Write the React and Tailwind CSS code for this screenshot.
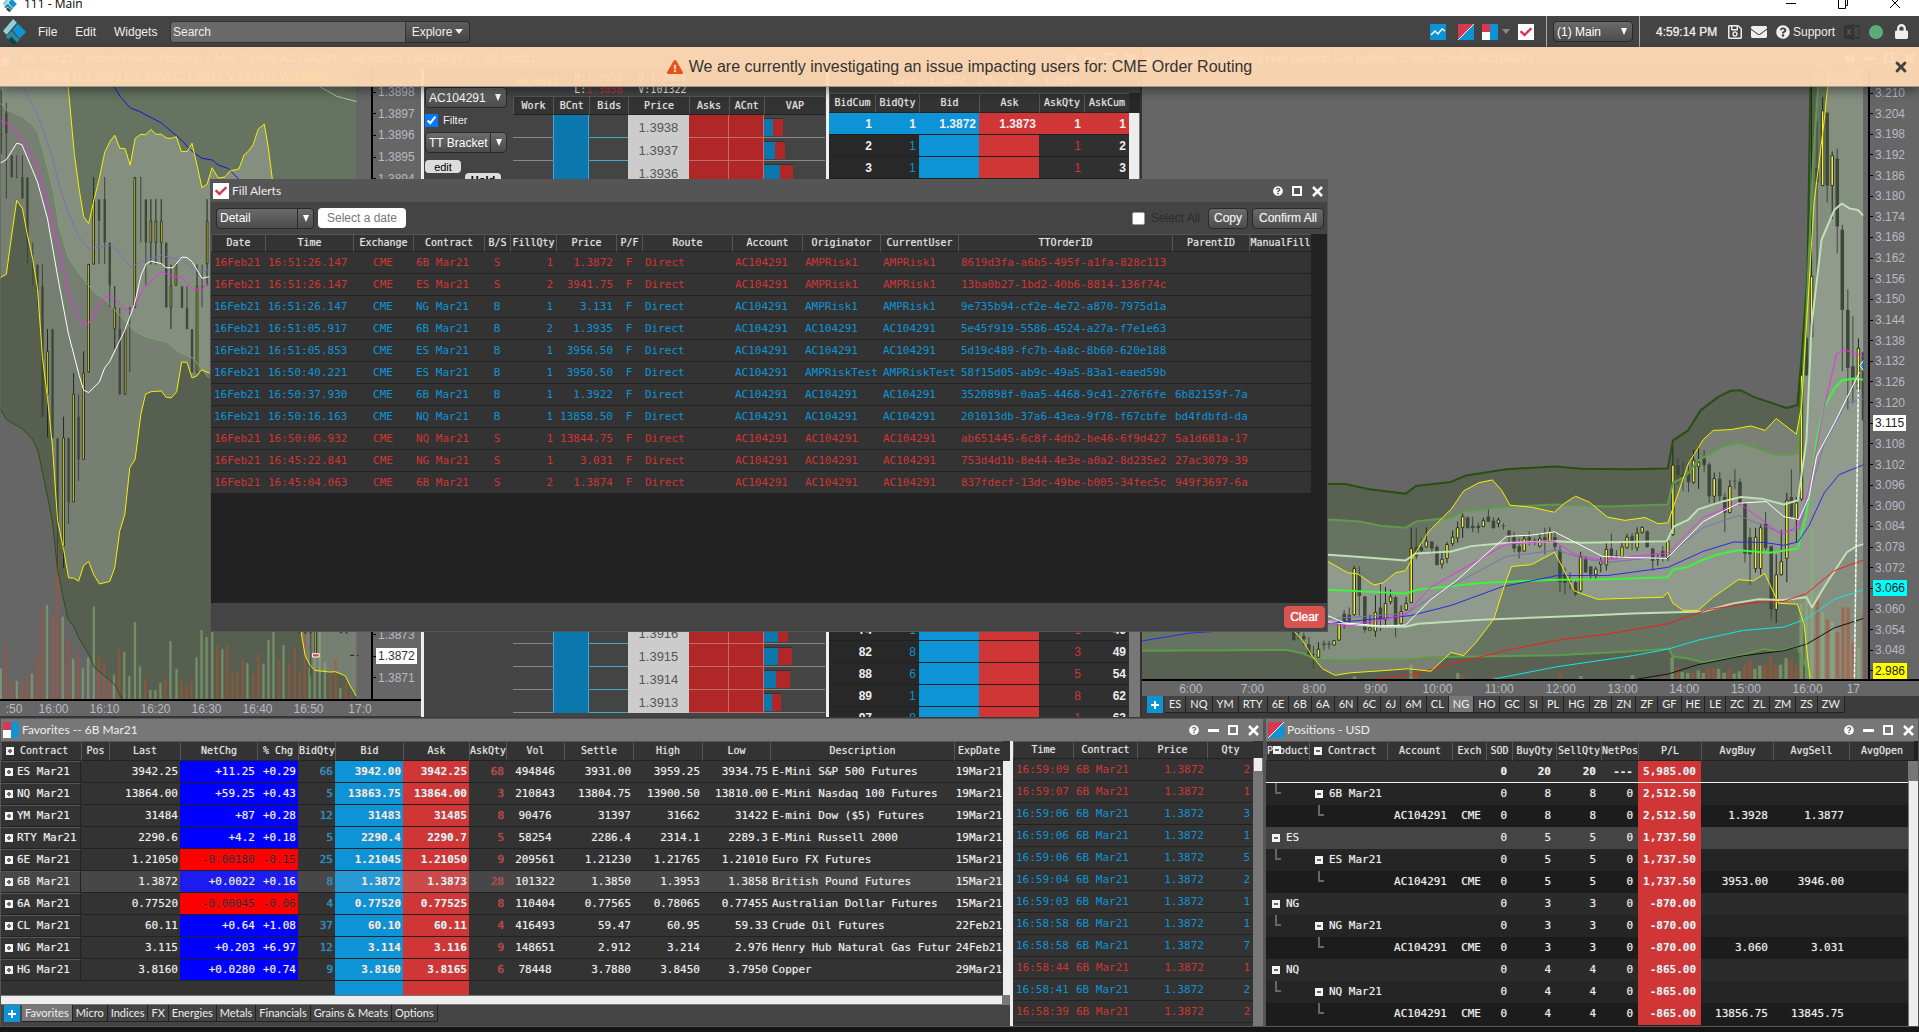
import { useState } from "react";
import { FaCheck, FaExclamationTriangle, FaLock, FaEnvelope, FaRegSave, FaQuestionCircle, FaTimes } from "react-icons/fa";

const BLUE = "text-[#0d94d6]";
const RED = "text-[#d03535]";

const fillColumns = [
    { label: "Date", w: "w-[54px]", align: "text-left" },
    { label: "Time", w: "w-[88px]", align: "text-left" },
    { label: "Exchange", w: "w-[60px]", align: "text-center" },
    { label: "Contract", w: "w-[71px]", align: "text-left" },
    { label: "B/S", w: "w-[26px]", align: "text-center" },
    { label: "FillQty", w: "w-[46px]", align: "text-right" },
    { label: "Price", w: "w-[60px]", align: "text-right" },
    { label: "P/F", w: "w-[26px]", align: "text-center" },
    { label: "Route", w: "w-[90px]", align: "text-left" },
    { label: "Account", w: "w-[70px]", align: "text-left" },
    { label: "Originator", w: "w-[78px]", align: "text-left" },
    { label: "CurrentUser", w: "w-[78px]", align: "text-left" },
    { label: "TTOrderID", w: "w-[214px]", align: "text-left" },
    { label: "ParentID", w: "w-[77px]", align: "text-left" },
    { label: "ManualFill", w: "w-[62px]", align: "text-left" },
];

const fills = [
    ["16:51:26.147", "6B Mar21", "S", "1", "1.3872", "AMPRisk1", "8619d3fa-a6b5-495f-a1fa-828c113", ""],
    ["16:51:26.147", "ES Mar21", "S", "2", "3941.75", "AMPRisk1", "13ba0b27-1bd2-40b6-8814-136f74c", ""],
    ["16:51:26.147", "NG Mar21", "B", "1", "3.131", "AMPRisk1", "9e735b94-cf2e-4e72-a870-7975d1a", ""],
    ["16:51:05.917", "6B Mar21", "B", "2", "1.3935", "AC104291", "5e45f919-5586-4524-a27a-f7e1e63", ""],
    ["16:51:05.853", "ES Mar21", "B", "1", "3956.50", "AC104291", "5d19c489-fc7b-4a8c-8b60-620e188", ""],
    ["16:50:40.221", "ES Mar21", "B", "1", "3950.50", "AMPRiskTest", "58f15d05-ab9c-49a5-83a1-eaed59b", ""],
    ["16:50:37.930", "6B Mar21", "B", "1", "1.3922", "AC104291", "3520898f-0aa5-4468-9c41-276f6fe", "6b82159f-7a"],
    ["16:50:16.163", "NQ Mar21", "B", "1", "13858.50", "AC104291", "201013db-37a6-43ea-9f78-f67cbfe", "bd4fdbfd-da"],
    ["16:50:06.932", "NQ Mar21", "S", "1", "13844.75", "AC104291", "ab651445-6c8f-4db2-be46-6f9d427", "5a1d681a-17"],
    ["16:45:22.841", "NG Mar21", "S", "1", "3.031", "AC104291", "753d4d1b-8e44-4e3e-a0a2-8d235e2", "27ac3079-39"],
    ["16:45:04.063", "6B Mar21", "S", "2", "1.3874", "AC104291", "837fdecf-13dc-49be-b005-34fec5c", "949f3697-6a"],
];

const favColumns = [
    { label: "Contract", w: "w-[80px]", align: "text-left" },
    { label: "Pos", w: "w-[28px]", align: "text-right" },
    { label: "Last", w: "w-[71px]", align: "text-right" },
    { label: "NetChg", w: "w-[77px]", align: "text-right" },
    { label: "% Chg", w: "w-[41px]", align: "text-right" },
    { label: "BidQty", w: "w-[37px]", align: "text-right" },
    { label: "Bid", w: "w-[68px]", align: "text-right" },
    { label: "Ask", w: "w-[66px]", align: "text-right" },
    { label: "AskQty", w: "w-[37px]", align: "text-right" },
    { label: "Vol", w: "w-[58px]", align: "text-center" },
    { label: "Settle", w: "w-[69px]", align: "text-right" },
    { label: "High", w: "w-[69px]", align: "text-right" },
    { label: "Low", w: "w-[68px]", align: "text-right" },
    { label: "Description", w: "w-[184px]", align: "text-left" },
    { label: "ExpDate", w: "w-[49px]", align: "text-right" },
];

const favorites = [
    ["ES Mar21", "", "3942.25", "+11.25", "+0.29", "66", "3942.00", "3942.25", "68", "494846", "3931.00", "3959.25", "3934.75", "E-Mini S&P 500 Futures", "19Mar21"],
    ["NQ Mar21", "", "13864.00", "+59.25", "+0.43", "5", "13863.75", "13864.00", "3", "210843", "13804.75", "13900.50", "13810.00", "E-Mini Nasdaq 100 Futures", "19Mar21"],
    ["YM Mar21", "", "31484", "+87", "+0.28", "12", "31483", "31485", "8", "90476", "31397", "31662", "31422", "E-mini Dow ($5) Futures", "19Mar21"],
    ["RTY Mar21", "", "2290.6", "+4.2", "+0.18", "5", "2290.4", "2290.7", "5", "58254", "2286.4", "2314.1", "2289.3", "E-Mini Russell 2000", "19Mar21"],
    ["6E Mar21", "", "1.21050", "-0.00180", "-0.15", "25", "1.21045", "1.21050", "9", "209561", "1.21230", "1.21765", "1.21010", "Euro FX Futures", "15Mar21"],
    ["6B Mar21", "", "1.3872", "+0.0022", "+0.16", "8", "1.3872", "1.3873", "28", "101322", "1.3850", "1.3953", "1.3858", "British Pound Futures", "15Mar21"],
    ["6A Mar21", "", "0.77520", "-0.00045", "-0.06", "4", "0.77520", "0.77525", "8", "110404", "0.77565", "0.78065", "0.77455", "Australian Dollar Futures", "15Mar21"],
    ["CL Mar21", "", "60.11", "+0.64", "+1.08", "37", "60.10", "60.11", "4", "416493", "59.47", "60.95", "59.33", "Crude Oil Futures", "22Feb21"],
    ["NG Mar21", "", "3.115", "+0.203", "+6.97", "12", "3.114", "3.116", "9", "148651", "2.912", "3.214", "2.976", "Henry Hub Natural Gas Futur", "24Feb21"],
    ["HG Mar21", "", "3.8160", "+0.0280", "+0.74", "9", "3.8160", "3.8165", "6", "78448", "3.7880", "3.8450", "3.7950", "Copper", "29Mar21"],
];

const favTabs = ["Favorites", "Micro", "Indices", "FX", "Energies", "Metals", "Financials", "Grains & Meats", "Options"];

const tradeColumns = [
    { label: "Time", w: "w-[60px]" },
    { label: "Contract", w: "w-[64px]" },
    { label: "Price", w: "w-[70px]" },
    { label: "Qty", w: "w-[46px]" },
];

const trades = [
    ["16:59:09", "2", "S"],
    ["16:59:07", "1", "S"],
    ["16:59:06", "3", "B"],
    ["16:59:06", "1", "B"],
    ["16:59:06", "5", "B"],
    ["16:59:04", "2", "B"],
    ["16:59:03", "1", "B"],
    ["16:58:58", "1", "B"],
    ["16:58:58", "7", "B"],
    ["16:58:44", "1", "S"],
    ["16:58:41", "2", "B"],
    ["16:58:39", "2", "S"],
];

const posColumns = [
    { label: "Product", w: "w-[43px]" },
    { label: "Contract", w: "w-[78px]" },
    { label: "Account", w: "w-[65px]" },
    { label: "Exch", w: "w-[34px]" },
    { label: "SOD", w: "w-[26px]" },
    { label: "BuyQty", w: "w-[44px]" },
    { label: "SellQty", w: "w-[45px]" },
    { label: "NetPos", w: "w-[37px]" },
    { label: "P/L", w: "w-[63px]" },
    { label: "AvgBuy", w: "w-[72px]" },
    { label: "AvgSell", w: "w-[76px]" },
    { label: "AvgOpen", w: "w-[65px]" },
];

// level: total, product, contract, account
const positions = [
    { level: "total", qty: "20", net: "---", pl: "5,985.00" },
    { level: "contract", name: "6B Mar21", qty: "8", net: "0", pl: "2,512.50" },
    { level: "account", qty: "8", net: "0", pl: "2,512.50", buy: "1.3928", sell: "1.3877" },
    { level: "product", name: "ES", qty: "5", net: "0", pl: "1,737.50", hover: true },
    { level: "contract", name: "ES Mar21", qty: "5", net: "0", pl: "1,737.50" },
    { level: "account", qty: "5", net: "0", pl: "1,737.50", buy: "3953.00", sell: "3946.00" },
    { level: "product", name: "NG", qty: "3", net: "0", pl: "-870.00" },
    { level: "contract", name: "NG Mar21", qty: "3", net: "0", pl: "-870.00" },
    { level: "account", qty: "3", net: "0", pl: "-870.00", buy: "3.060", sell: "3.031" },
    { level: "product", name: "NQ", qty: "4", net: "0", pl: "-865.00" },
    { level: "contract", name: "NQ Mar21", qty: "4", net: "0", pl: "-865.00" },
    { level: "account", qty: "4", net: "0", pl: "-865.00", buy: "13856.75", sell: "13845.75" },
];

const ladderColumns = [
    { label: "Work", w: "w-[40px]" },
    { label: "BCnt", w: "w-[36px]" },
    { label: "Bids", w: "w-[39px]" },
    { label: "Price", w: "w-[60px]" },
    { label: "Asks", w: "w-[40px]" },
    { label: "ACnt", w: "w-[35px]" },
    { label: "VAP", w: "w-[61px]" },
];

// [bid volume, ask volume] per price, starting at 1.3938
const vap = [
    [9, 10], [11, 10], [16, 13], [12, 8], [9, 9], [14, 10], [10, 7], [8, 12], [13, 13],
    [15, 9], [11, 12], [9, 8], [12, 10], [14, 14], [10, 10], [8, 9], [12, 11], [16, 12],
    [13, 10], [11, 9], [9, 10], [12, 12], [14, 10], [14, 14], [12, 14], [8, 9],
];

const depthColumns = [
    { label: "BidCum", w: "w-[46px]" },
    { label: "BidQty", w: "w-[44px]" },
    { label: "Bid", w: "w-[60px]" },
    { label: "Ask", w: "w-[60px]" },
    { label: "AskQty", w: "w-[45px]" },
    { label: "AskCum", w: "w-[45px]" },
];

const depth = { 0: ["1", "1", "1", "1"], 1: ["2", "1", "1", "2"], 2: ["3", "1", "1", "3"], 23: ["74", "1", "1", "46"], 24: ["82", "8", "3", "49"], 25: ["88", "6", "5", "54"], 26: ["89", "1", "8", "62"], 27: ["97", "8", "1", "63"] };

const chartTabs = ["ES", "NQ", "YM", "RTY", "6E", "6B", "6A", "6N", "6C", "6J", "6M", "CL", "NG", "HO", "GC", "SI", "PL", "HG", "ZB", "ZN", "ZF", "GF", "HE", "LE", "ZC", "ZL", "ZM", "ZS", "ZW"];

// candles: [x, high, body top, body bottom, low, up]
const poundCandles = [
    [7, 25, 132, 134, 182, 0], [22, 55, 80, 130, 290, 0], [38, 184, 185, 238, 239, 0], [53, 184, 237, 239, 240, 0], [70, 184, 238, 290, 291, 0],
    [85, 238, 239, 395, 450, 0], [101, 398, 450, 452, 503, 0], [115, 452, 453, 515, 557, 0], [130, 452, 505, 825, 826, 0], [145, 610, 665, 770, 875, 1],
    [160, 610, 611, 877, 878, 0], [175, 877, 878, 1088, 1196, 0], [193, 825, 877, 1142, 1195, 1], [208, 877, 878, 1035, 1088, 0], [223, 718, 770, 1034, 1035, 1],
    [238, 770, 825, 930, 983, 0], [253, 665, 718, 930, 931, 1], [268, 451, 452, 716, 718, 1], [283, 238, 292, 451, 452, 1], [299, 292, 293, 345, 451, 0],
    [316, 238, 292, 398, 451, 0], [331, 398, 399, 503, 556, 0], [346, 505, 558, 610, 660, 1], [361, 558, 610, 770, 771, 0], [377, 610, 612, 770, 771, 1],
    [391, 557, 558, 560, 716, 0], [406, 238, 239, 557, 558, 1], [424, 238, 239, 240, 398, 0], [439, 292, 293, 398, 503, 0], [454, 292, 346, 398, 452, 1],
    [469, 292, 346, 398, 452, 1], [485, 292, 346, 398, 452, 1], [500, 398, 399, 557, 558, 0], [514, 452, 505, 557, 610, 1], [529, 450, 453, 503, 504, 1],
    [547, 505, 506, 558, 559, 0], [562, 505, 558, 610, 611, 0], [577, 610, 611, 716, 717, 0], [592, 452, 505, 716, 718, 1], [607, 452, 505, 507, 557, 0],
    [622, 292, 346, 450, 504, 1], [899, 1340, 1352, 1356, 1357, 0], [916, 1340, 1350, 1357, 1358, 0], [932, 1340, 1350, 1356, 1462, 0], [947, 1340, 1341, 1408, 1409, 1], [1022, 1340, 1342, 1354, 1356, 1], [1039, 1340, 1342, 1356, 1357, 0],
];

const poundVolume = [
    [5, 1442, 1], [20, 1388, 0], [38, 1475, 0], [53, 1472, 1], [68, 1480, 0], [83, 1461, 0], [98, 1454, 1], [113, 1412, 0], [128, 1300, 0],
    [143, 1287, 1], [160, 1316, 0], [175, 1135, 0], [190, 1315, 1], [206, 1370, 0], [221, 1418, 1], [236, 1402, 0], [250, 1442, 1], [266, 1415, 1],
    [283, 1290, 1], [298, 1413, 0], [313, 1427, 0], [328, 1465, 0], [343, 1457, 1], [358, 1395, 0], [374, 1402, 1], [389, 1461, 1], [406, 1328, 1],
    [421, 1437, 1], [436, 1467, 0], [452, 1495, 1], [467, 1495, 1], [482, 1478, 1], [496, 1465, 0], [512, 1375, 1], [530, 1443, 1], [545, 1473, 0],
    [560, 1486, 0], [575, 1473, 0], [590, 1415, 1], [605, 1348, 1], [620, 1365, 1], [637, 1340, 1], [652, 1385, 0], [667, 1395, 1], [682, 1385, 0],
    [697, 1454, 0], [712, 1451, 0], [728, 1420, 0], [742, 1429, 1], [760, 1457, 0], [775, 1405, 0], [790, 1430, 1], [805, 1372, 1], [820, 1340, 1],
    [837, 1422, 0], [850, 1385, 1], [866, 1429, 0], [884, 1390, 0], [899, 1448, 0], [913, 1340, 0], [928, 1440, 1], [943, 1400, 1], [958, 1340, 1],
    [974, 1427, 1], [990, 1455, 0], [1006, 1420, 0], [1020, 1490, 1], [1037, 1478, 0], [1052, 1500, 0],
];

const gasCandles = [
    [328, 1330, 1340, 1370, 1371, 0], [337, 1330, 1345, 1352, 1368, 0], [348, 1352, 1360, 1368, 1384, 0], [358, 1362, 1380, 1412, 1414, 0], [367, 1384, 1404, 1406, 1440, 0],
    [377, 1375, 1392, 1412, 1413, 1], [388, 1371, 1378, 1382, 1395, 0], [398, 1372, 1378, 1381, 1392, 0], [408, 1370, 1371, 1382, 1383, 1], [418, 1320, 1330, 1370, 1371, 1],
    [428, 1296, 1305, 1330, 1342, 0], [438, 1290, 1308, 1322, 1330, 0], [448, 1188, 1195, 1308, 1310, 1], [458, 1190, 1210, 1262, 1310, 0], [469, 1262, 1263, 1345, 1352, 0], [479, 1308, 1340, 1346, 1347, 1],
    [490, 1260, 1302, 1348, 1362, 1], [500, 1232, 1290, 1320, 1348, 0], [510, 1240, 1280, 1320, 1333, 1], [520, 1246, 1264, 1276, 1282, 1], [530, 1262, 1265, 1333, 1362, 0], [541, 1285, 1300, 1330, 1334, 1],
    [551, 1264, 1280, 1296, 1298, 1], [561, 1095, 1146, 1278, 1280, 1], [571, 1095, 1142, 1165, 1172, 0], [581, 1120, 1142, 1152, 1156, 0], [591, 1094, 1128, 1142, 1143, 1], [602, 1128, 1129, 1146, 1160, 0],
    [612, 1138, 1142, 1186, 1188, 0], [622, 1152, 1172, 1184, 1195, 1], [632, 1130, 1136, 1170, 1182, 1], [643, 1102, 1118, 1134, 1140, 1], [653, 1080, 1095, 1120, 1132, 1], [663, 1060, 1068, 1094, 1120, 1],
    [673, 1068, 1070, 1096, 1097, 0], [683, 1068, 1090, 1096, 1106, 0], [694, 1082, 1090, 1096, 1108, 0], [704, 1070, 1078, 1092, 1094, 1], [714, 1050, 1068, 1080, 1081, 0], [724, 1070, 1078, 1096, 1097, 0],
    [734, 1070, 1076, 1084, 1094, 1], [744, 1084, 1090, 1092, 1100, 0], [755, 1100, 1102, 1116, 1130, 0], [765, 1105, 1118, 1146, 1155, 0], [775, 1120, 1140, 1154, 1170, 0], [785, 1112, 1122, 1152, 1153, 1], [795, 1104, 1118, 1126, 1138, 0],
    [806, 1120, 1126, 1128, 1138, 0], [816, 1108, 1122, 1140, 1144, 1], [826, 1095, 1118, 1126, 1160, 0], [836, 1094, 1106, 1128, 1130, 1], [846, 1105, 1118, 1142, 1150, 0], [856, 1140, 1150, 1228, 1252, 0],
    [866, 1192, 1208, 1230, 1258, 0], [876, 1204, 1225, 1228, 1246, 0], [887, 1225, 1228, 1258, 1262, 0], [897, 1154, 1166, 1250, 1254, 1], [907, 1164, 1170, 1204, 1206, 0], [917, 1188, 1190, 1210, 1220, 0],
    [927, 1190, 1196, 1210, 1220, 1], [937, 1168, 1178, 1184, 1204, 1], [948, 1130, 1148, 1186, 1200, 1], [958, 1110, 1146, 1168, 1170, 0], [968, 1150, 1162, 1166, 1172, 0], [979, 1132, 1142, 1166, 1167, 1],
    [989, 1110, 1118, 1144, 1146, 1], [999, 1108, 1116, 1130, 1150, 0], [1009, 1094, 1108, 1144, 1152, 1], [1019, 1092, 1094, 1106, 1110, 1], [1029, 1102, 1104, 1142, 1144, 0], [1040, 1144, 1146, 1176, 1200, 0],
    [1050, 1158, 1168, 1172, 1188, 1], [1060, 1140, 1152, 1168, 1178, 0], [1070, 1120, 1128, 1168, 1176, 1], [1080, 895, 942, 1112, 1115, 1], [1090, 925, 942, 965, 990, 0], [1100, 934, 965, 972, 1006, 0], [1111, 944, 962, 984, 1008, 0], [1121, 905, 930, 984, 988, 1],
    [1131, 895, 935, 945, 1000, 1], [1142, 905, 925, 942, 960, 0], [1152, 935, 940, 1018, 1034, 0], [1162, 960, 975, 1018, 1034, 1], [1173, 958, 975, 1018, 1034, 0], [1183, 1010, 1020, 1058, 1106, 0], [1193, 978, 994, 1058, 1060, 1],
    [1203, 952, 980, 982, 1000, 0], [1213, 975, 983, 1036, 1040, 0], [1223, 1034, 1036, 1158, 1180, 0], [1233, 1095, 1118, 1160, 1235, 0], [1244, 1095, 1118, 1195, 1205, 1], [1254, 1085, 1095, 1195, 1210, 1], [1264, 1056, 1085, 1145, 1150, 0],
    [1275, 1138, 1140, 1295, 1320, 0], [1285, 1160, 1210, 1295, 1328, 1], [1295, 1100, 1178, 1210, 1212, 1], [1306, 1010, 1028, 1170, 1228, 1], [1315, 952, 1020, 1068, 1070, 0], [1325, 1020, 1034, 1074, 1130, 1], [1335, 700, 722, 1025, 1030, 1],
    [1345, 480, 630, 722, 724, 0], [1355, 0, 480, 628, 640, 1], [1366, 100, 215, 250, 480, 0], [1377, 42, 75, 258, 260, 1], [1386, 78, 80, 258, 300, 0], [1396, 175, 185, 258, 340, 1], [1406, 168, 192, 358, 424, 0],
    [1416, 354, 366, 562, 712, 0], [1427, 512, 562, 704, 806, 0], [1437, 578, 700, 728, 790, 0], [1448, 632, 656, 756, 780, 1], [1458, 664, 666, 832, 1040, 0],
];

const gasVolume = [
    [560, 1430, 1], [571, 1446, 0], [448, 1458, 1], [653, 1450, 1], [663, 1456, 0], [724, 1458, 0], [765, 1460, 0], [856, 1452, 0], [897, 1458, 1], [999, 1455, 1], [1060, 1456, 0],
    [1078, 1412, 1], [1088, 1436, 0], [1098, 1448, 1], [1109, 1450, 1], [1119, 1448, 0], [1130, 1444, 1], [1140, 1450, 1], [1150, 1436, 0], [1160, 1438, 0], [1170, 1440, 1], [1181, 1450, 1], [1191, 1440, 0],
    [1201, 1452, 1], [1211, 1446, 1], [1222, 1430, 0], [1232, 1420, 0], [1242, 1440, 1], [1252, 1432, 1], [1262, 1430, 0], [1273, 1412, 0], [1283, 1432, 0], [1293, 1430, 1], [1304, 1414, 1], [1314, 1418, 0], [1324, 1432, 0],
    [1334, 1280, 1], [1345, 1250, 1], [1355, 1095, 1], [1366, 1270, 0], [1376, 1300, 1], [1386, 1320, 0], [1396, 1325, 1], [1406, 1350, 0], [1417, 1290, 0], [1427, 1290, 0], [1437, 1376, 0], [1448, 1388, 1], [1458, 1296, 0],
];

const gasUpper = "395,988 430,988 475,1000 550,1012 570,993 640,983 670,967 750,952 845,945 900,951 1000,952 1070,950 1080,882 1110,857 1135,808 1170,775 1195,760 1215,759 1240,775 1305,802 1327,795 1335,680 1347,480 1353,-22";
const gasMiddle = "395,1075 460,1080 500,1090 550,1095 570,1080 640,1070 665,1055 730,1045 845,1038 950,1043 1070,1038 1080,985 1105,970 1130,930 1180,895 1210,888 1240,897 1280,915 1305,918 1327,912 1340,700 1358,200 1370,-22";
const gasInner = "395,1161 440,1165 550,1175 570,1158 640,1153 680,1140 740,1133 850,1128 900,1132 1068,1128 1082,1092 1110,1076 1130,1050 1180,1030 1215,1020 1260,1025 1300,1038 1328,1028 1345,880 1355,600 1375,390 1400,318 1415,302 1430,314 1447,318 1458,332";
const gasInnerLow = "395,1325 430,1330 500,1337 550,1337 575,1330 700,1320 900,1310 1000,1305 1140,1300 1200,1280 1250,1270 1300,1272 1345,1265 1356,1290 1380,1240 1425,1155 1445,1140 1458,1135";
const gasMiddleLow = "27,1396 315,1394 345,1402 375,1418 430,1420 500,1417 550,1418 600,1412 850,1407 1000,1397 1072,1391 1080,1410 1110,1415 1140,1424 1200,1412 1260,1392 1290,1397 1327,1386 1345,1440 1352,1465";
const gasYellow = "395,1177 435,1205 455,1208 487,1235 505,1230 530,1205 550,1200 565,1165 595,1105 640,1050 665,1005 695,985 722,978 740,1003 757,1040 800,1045 845,1057 865,1035 887,1018 915,1033 950,1069 985,1077 1025,1070 1050,1085 1070,1083 1085,1030 1110,940 1140,880 1160,857 1195,855 1235,846 1263,857 1285,828 1325,866 1335,800 1345,600 1360,300 1380,100 1390,-22";
const gasYellowLow = "330,1350 345,1370 365,1410 385,1440 410,1456 440,1450 500,1445 555,1440 600,1446 640,1400 665,1408 690,1375 725,1318 745,1240 760,1190 800,1185 845,1155 860,1190 885,1250 930,1270 1060,1265 1070,1253 1080,1280 1100,1297 1130,1297 1160,1265 1210,1222 1240,1225 1262,1207 1290,1280 1327,1282 1340,1330 1352,1465";

const poundYellow = "200,-22 207,17 225,180 240,270 253,335 268,352 285,290 300,240 316,177 331,152 346,135 361,167 377,168 392,209 407,143 424,133 439,134 454,121 469,133 485,133 500,142 515,143 530,139 545,175 563,175 577,155 592,210 607,264 622,255 637,215 655,240 675,238 690,223 717,218 733,183 745,175 760,158 775,120 793,108 805,165 817,243 870,900 1069,1100";
const poundYellowLow = "5,484 22,476 38,380 53,295 70,315 85,380 101,440 115,510 130,680 145,780 160,900 175,1080 193,1150 208,1220 223,1221 238,1228 253,1190 268,1180 283,1212 300,1235 331,1229 346,1195 361,1105 376,1065 391,950 407,930 424,820 438,770 454,764 485,762 500,778 515,779 531,764 546,691 562,692 577,730 592,725 605,710 627,718 700,700 850,1000 903,1352 915,1410 930,1435 945,1447 990,1451 1006,1450 1035,1460 1050,1485 1069,1511";
const poundMiddle = "5,57 22,73 70,90 100,110 117,130 145,215 162,270 180,360 208,437 240,475 285,520 330,548 375,590 405,615 440,630 500,642 540,668 580,682 627,730";
const poundOuter = "5,808 22,832 70,855 100,880 117,910 145,1020 160,1085 175,1200 205,1320 224,1340 240,1370 270,1410 285,1440 330,1470 347,1483 368,1517";

const reverse = (points) => points.split(" ").reverse().join(" ");

export default function App() {
    const [bannerOpen, setBannerOpen] = useState(true);
    const [alertsOpen, setAlertsOpen] = useState(true);

    return (
        <div className="flex h-screen min-h-[800px] flex-col overflow-hidden bg-[#161616] font-['Liberation_Sans',Arial,sans-serif] text-[12px] leading-4 text-[#eee]">
            <TitleBar />
            <Toolbar />
            <main className="relative flex min-h-0 flex-1 flex-col">
                <div className="grid min-h-0 flex-1 grid-cols-[1142fr_777fr] bg-[#3a3a3a] pb-px">
                    <PoundWindow />
                    <GasWindow />
                </div>
                <div className="grid h-[309px] shrink-0 grid-cols-[1264fr_655fr] bg-[#222]">
                    <FavoritesWindow />
                    <PositionsWindow />
                </div>
                {bannerOpen && <Banner onClose={() => setBannerOpen(false)} />}
                {alertsOpen && <FillAlerts onClose={() => setAlertsOpen(false)} />}
            </main>
            <div className="h-[5px] shrink-0" />
        </div>
    );
}

function Logo({ className }) {
    return (
        <svg viewBox="0 0 26 28" className={className}>
            <path d="M11 0 15 4 4 17 0 13Z" fill="#8fd0dc" />
            <path d="M16 5 25 14 18 21 10 12Z" fill="#0d94d6" />
            <path d="M9 13 18 22 15 25 9 19 6 22 3 19Z" fill="#2f8a9a" />
            <path d="M9 20 15 26 12 28 6 23Z" fill="#0b4257" />
        </svg>
    );
}

function TitleBar() {
    return (
        <header className="flex h-4 shrink-0 items-start justify-between overflow-hidden bg-white text-black">
            <div className="flex items-start gap-1.5 pl-0.5">
                <Logo className="-mt-1 h-4 w-4" />
                <h1 className="-mt-1 font-['Open_Sans',sans-serif] text-[12px] leading-4">111 - Main</h1>
            </div>
            <div className="flex w-[134px] justify-between pr-[18px]">
                <button aria-label="Minimize window">
                    <svg width="12" height="12"><path d="M1 3.5H11" stroke="black" /></svg>
                </button>
                <button aria-label="Restore window">
                    <svg width="12" height="12" fill="none" stroke="black"><path d="M1.5 0V8.500H8.500V0M8.500 5.500H10.500V0" /></svg>
                </button>
                <button aria-label="Close window">
                    <svg width="12" height="12" stroke="black"><path d="M1 -2 11 8M11 -2 1 8" /></svg>
                </button>
            </div>
        </header>
    );
}

function Toolbar() {
    return (
        <nav className="flex h-[31px] shrink-0 items-center bg-[#444] text-[12px] [text-shadow:0_0_1px_#ccc]">
            <Logo className="ml-[3px] h-7 w-6" />
            <div className="ml-[11px] flex w-[132px] gap-[18px]">
                <button>File</button>
                <button>Edit</button>
                <button>Widgets</button>
            </div>
            <input
                aria-label="Search"
                placeholder="Search"
                className="h-[22px] w-[236px] rounded-l border border-[#333] bg-[#696969] px-0.5 placeholder:text-[#eee]"
            />
            <button className="flex h-[22px] w-16 items-center justify-center gap-[3px] rounded-r border border-l-0 border-[#2c2c2c] bg-linear-to-b from-[#5c5c5c] to-[#454545]">
                Explore
                <svg viewBox="0 0 8 5" className="h-[5px] w-2"><path d="M0 0H8L4 5Z" fill="#eee" /></svg>
            </button>
            <div className="ml-auto flex items-center">
                <div className="mr-3 flex items-center gap-2">
                    <ChartIcon className="mr-1 h-4 w-4" />
                    <PositionsIcon />
                    <div className="flex items-center gap-1">
                        <GridIcon className="h-4 w-4" />
                        <svg viewBox="0 0 8 5" className="h-[5px] w-2"><path d="M0 0H8L4 5Z" fill="#888" /></svg>
                    </div>
                    <CheckIcon />
                </div>
                <div className="flex h-[31px] items-center border-x border-[#aaa] px-[6px]">
                    <Dropdown label="Workspace" value="(1) Main" className="w-20" />
                </div>
                <time className="ml-4 w-[68px]">4:59:14 PM</time>
                <button aria-label="Save"><FaRegSave className="ml-1 h-4 w-[14px]" /></button>
                <button aria-label="Messages"><FaEnvelope className="ml-[9px] h-4 w-4" /></button>
                <button className="ml-[9px] flex items-center gap-[3px]"><FaQuestionCircle className="h-[14px] w-[14px]" />Support</button>
                <button aria-label="Excel link" className="ml-[9px]">
                    <svg viewBox="0 0 16 16" className="h-4 w-4">
                        <path d="M0 2 10 0V16L0 14Z" fill="#333" />
                        <path d="M10 2H16V14H10" fill="none" stroke="#333" strokeWidth="1.500" />
                        <path d="M3 5 7 11M7 5 3 11" stroke="#555" strokeWidth="1.500" />
                    </svg>
                </button>
                <span className="ml-[9px] h-[14px] w-[14px] rounded-full bg-[#5dab78]" />
                <button aria-label="Lock"><FaLock className="mr-[11px] ml-3 h-[15px] w-[13px]" /></button>
            </div>
        </nav>
    );
}

function ChartIcon({ className }) {
    return (
        <svg viewBox="0 0 16 16" className={className}>
            <rect width="16" height="16" fill="#0d94d6" />
            <path d="M1 11 5 7 8 10 12 5 15 7" stroke="white" strokeWidth="1.500" fill="none" />
        </svg>
    );
}

function PositionsIcon() {
    return (
        <svg viewBox="0 0 16 16" className="h-4 w-4">
            <rect width="16" height="16" fill="#0d94d6" />
            <path d="M0 0H16L0 16Z" fill="#d63a53" />
            <path d="M0 16 16 0" stroke="white" />
        </svg>
    );
}

function GridIcon({ className }) {
    return (
        <svg viewBox="0 0 16 16" className={className}>
            <rect width="8" height="8" fill="#d63a53" />
            <rect y="8" width="8" height="8" fill="white" />
            <rect x="8" width="8" height="16" fill="#0d94d6" />
        </svg>
    );
}

function CheckIcon() {
    return (
        <span className="flex h-4 w-4 items-center justify-center bg-white text-[#d63a53]">
            <FaCheck className="h-3 w-3" />
        </span>
    );
}

function Dropdown({ label, value, className, split }) {
    return (
        <label className={`flex h-[21px] items-center rounded border border-[#2a2a2a] bg-linear-to-b from-[#6b6b6b] to-[#4c4c4c] text-[12px] text-white ${className}`}>
            <select aria-label={label} className="h-full min-w-0 flex-1 appearance-none bg-transparent pl-[3px]" defaultValue={value}>
                <option>{value}</option>
            </select>
            <span className={`flex h-full w-4 shrink-0 items-center justify-center ${split ? "border-l border-[#2a2a2a]" : ""}`}>
                <svg viewBox="0 0 6 7" className="h-[7px] w-1.5"><path d="M0 0H6L3 7Z" fill="white" /></svg>
            </span>
        </label>
    );
}

function Banner({ onClose }) {
    return (
        <div className="absolute inset-x-0 top-0 z-20 flex h-10 items-center justify-center border-b border-[#999] bg-[#fed9b2]/95 text-[16px] text-[#333] shadow-[0_4px_10px_rgba(0,0,0,.4)]">
            <FaExclamationTriangle className="mr-1.5 h-4 w-4 text-[#e8501c]" />
            <p>We are currently investigating an issue impacting users for: CME Order Routing</p>
            <button onClick={onClose} aria-label="Dismiss" className="absolute right-2.5 text-[#444]">
                <FaTimes className="h-4 w-4" />
            </button>
        </div>
    );
}

function WindowControls({ minimize = true, onClose }) {
    return (
        <div className="ml-auto flex items-center gap-[9px] pr-0.5 text-white">
            <button aria-label="Help"><FaQuestionCircle className="h-[10px] w-[10px]" /></button>
            {minimize && (
                <button aria-label="Minimize"><svg width="11" height="11"><path d="M0 5.500H11" stroke="white" strokeWidth="3" /></svg></button>
            )}
            <button aria-label="Maximize"><svg width="11" height="11"><rect x="1" y="1" width="8" height="8" fill="none" stroke="white" strokeWidth="2" /></svg></button>
            <button aria-label="Close" onClick={onClose}><svg width="11" height="11"><path d="M1 1 10 10M10 1 1 10" stroke="white" strokeWidth="2.500" /></svg></button>
        </div>
    );
}

function WindowTitle({ icon, title, minimize, onClose, className }) {
    return (
        <div className={`flex h-[22px] shrink-0 items-center gap-[3px] px-0.5 ${className}`}>
            {icon}
            <h2 className="font-[Lato,sans-serif] text-[12px] whitespace-nowrap">{title}</h2>
            <WindowControls minimize={minimize} onClose={onClose} />
        </div>
    );
}

function Columns({ columns }) {
    return (
        <colgroup>
            {columns.map((column) => (
                <col key={column.label} className={column.w} />
            ))}
        </colgroup>
    );
}

function Th({ children, className = "" }) {
    return (
        <th className={`border-t border-b border-l border-t-[#555] border-b-[#222] border-l-[#555] bg-[#333] text-center text-[10px] font-normal whitespace-nowrap text-[#e4e4e4] [text-shadow:0_0_1px_#999] ${className}`}>
            {children}
        </th>
    );
}

function Expander({ open }) {
    return (
        <svg viewBox="0 0 8 8" className="inline h-2 w-2 shrink-0" shapeRendering="crispEdges">
            <rect width="8" height="8" fill="#f2f2f2" />
            {open ? (
                <rect x="2" y="3" width="4" height="2" fill="#666" />
            ) : (
                <path d="M3 2H5V3H6V5H5V6H3V5H2V3H3Z" fill="#666" />
            )}
        </svg>
    );
}

function Candles({ data }) {
    return data.map(([x, high, top, bottom, low, up]) => (
        <g key={x}>
            <path d={`M${x} ${high}V${low}`} stroke={up ? "#23281c" : "#3d4538"} strokeWidth="1" vectorEffect="non-scaling-stroke" />
            {up ? (
                <rect x={x - 2.5} y={top} width="5" height={bottom - top} fill="#f4f43c" stroke="#2b3020" vectorEffect="non-scaling-stroke" />
            ) : (
                <rect x={x - 3.5} y={top} width="7" height={bottom - top} fill="#3f473b" />
            )}
        </g>
    ));
}

function Volume({ data, base }) {
    return data.map(([x, top, up]) => (
        <rect key={x} x={x - 3} y={top} width="7" height={base - top} fill={up ? "#8cb47a" : "#b4512f"} opacity="0.55" />
    ));
}

function Line({ points, color, width = 1 }) {
    return <polyline points={points} fill="none" stroke={color} strokeWidth={width} strokeLinejoin="round" vectorEffect="non-scaling-stroke" />;
}

function PriceAxis({ prices, marks, className }) {
    return (
        <ol className={`flex shrink-0 flex-col justify-between border-l-2 border-black text-[12px] text-[#b5bac4] ${className}`}>
            {prices.map((price) => {
                const mark = marks[price];
                return (
                    <li key={price} className="flex h-4 items-center">
                        <span className="h-px w-[3px] bg-black" />
                        <span className={`px-0.5 ${mark ? mark.style : ""}`}>{mark ? mark.text : price}</span>
                    </li>
                );
            })}
        </ol>
    );
}

function PoundWindow() {
    const prices = Array.from({ length: 28 }, (_, i) => (1.3898 - i * 0.0001).toFixed(4));
    const marks = { 1.3872: { text: "1.3872", style: "bg-white text-[#333]" } };

    return (
        <section className="flex min-h-0 min-w-0 flex-col overflow-hidden border-r-2 border-[#333] bg-[#444]">
            <WindowTitle
                className="bg-[#777]"
                icon={<GridIcon className="h-4 w-4" />}
                title="6B Mar21 - British Pound Futures, 1 Min: Candle AC104291 – 6B Mar21 | AC104291 – 6B Mar21"
            />
            <div className="grid min-h-0 flex-1 grid-cols-[421fr_405fr_314fr]">
                <div className="relative flex min-h-0 flex-col overflow-hidden border-b border-[#333] bg-[#666]">
                    <p className="absolute top-0 left-5 text-[12px] whitespace-nowrap">O 1.3858 H 1.3953 L 1.3858 C 1.3872 V 101322 <span className="text-[#ff0]">Δ 0.0022</span></p>
                    <div className="flex min-h-0 flex-1">
                        <PoundChart />
                        <PriceAxis prices={prices} marks={marks} className="w-[50px] pt-[15px] pb-[13px]" />
                    </div>
                    <TimeAxis
                        labels={[":50", "16:00", "16:10", "16:20", "16:30", "16:40", "16:50", "17:0"]}
                        className="h-[17px] grid-cols-[28px_repeat(6,51px)_52px] border-t-2"
                    />
                </div>
                <Ladder />
                <Depth />
            </div>
        </section>
    );
}

function TimeAxis({ labels, className }) {
    return (
        <ol className={`grid shrink-0 border-black text-[12px] text-[#b5bac4] ${className}`}>
            {labels.map((label) => (
                <li key={label} className="text-center leading-4">{label}</li>
            ))}
        </ol>
    );
}

function PoundChart() {
    return (
        <svg viewBox="3 -27 1109 1544" preserveAspectRatio="none" className="h-full min-h-0 min-w-0 flex-1">
            <defs>
                <clipPath id="pound"><rect x="0" y="-27" width="1069" height="1545" /></clipPath>
            </defs>
            <g clipPath="url(#pound)">
                <polygon points={`${poundOuter} 1069,1517 1069,-27 5,-27`} fill="#565f50" />
                <polygon points={`${poundMiddle} 1069,1000 1069,-27 5,-27`} fill="#667361" />
                <polygon points={`${poundYellowLow} ${reverse(poundYellow)} 5,-27`} fill="#fff" opacity="0.2" />
                <Volume data={poundVolume} base={1517} />
                <Candles data={poundCandles} />
                <Line points={poundOuter} color="#2c5016" />
                <Line points={poundMiddle} color="#7ba56a" />
                <Line points="960,17 1010,40 1069,53" color="#a8cc9a" />
                <Line points="50,-22 70,17 100,60 117,90 160,190 180,260 207,325 240,385 268,413 330,405 350,415 393,458 440,440 485,430 540,440 600,470 627,465" color="#7f70b0" />
                <Line points="300,-22 345,17 362,40 393,69 420,77 485,105 540,143 580,177 607,192 637,196 655,208 685,217 717,243" color="#1414d8" />
                <Line points="5,100 22,105 55,128 85,165 115,220 145,305 175,400 207,520 240,585 253,602 268,598 300,550 320,530 345,534 375,560 393,566 410,550 425,520 455,492 485,471 520,480 545,483 580,513 605,515 627,497" color="#f02cf0" />
                <Line points="5,203 22,195 53,155 68,158 100,220 115,250 145,340 175,480 207,620 240,725 253,760 268,766 300,740 316,705 331,690 360,640 375,615 405,550 424,480 440,450 454,444 485,450 500,460 520,460 547,434 562,435 577,445 607,486 627,482" color="#fff" />
                <Line points={poundYellow} color="#f2f200" />
                <Line points={poundYellowLow} color="#f2f200" />
            </g>
            <rect x="937" y="1406" width="20" height="8" fill="#d63a53" stroke="#fff" vectorEffect="non-scaling-stroke" />
            <path d="M1050 1410H1075" stroke="#222" strokeDasharray="4 3" vectorEffect="non-scaling-stroke" />
        </svg>
    );
}

function GasChart() {
    return (
        <svg viewBox="27 -27 1440 1492" preserveAspectRatio="none" className="h-full min-h-0 min-w-0 flex-1">
            <defs>
                <clipPath id="gas"><rect x="27" y="-27" width="1431" height="1492" /></clipPath>
            </defs>
            <g clipPath="url(#gas)">
                <polygon points={`27,1100 ${gasUpper} 1458,-27 1458,1465 27,1465`} fill="#596153" />
                <polygon points={`27,1200 ${gasMiddle} 1458,-27 1458,1465 ${reverse(gasMiddleLow)}`} fill="#667361" />
                <polygon points={`${gasInner} ${reverse(gasInnerLow)}`} fill="#fff" opacity="0.1" />
                <polygon points={`${gasYellow} 1458,-27 1458,1465 ${reverse(gasYellowLow)}`} fill="#fff" opacity="0.2" />
                <Volume data={gasVolume} base={1465} />
                <Candles data={gasCandles} />
                <Line points={gasUpper} color="#26500f" width={2} />
                <Line points={gasMiddle} color="#5f9a4a" width={2} />
                <Line points={gasInner} color="#bfe0b4" width={2} />
                <Line points={gasInnerLow} color="#bfe0b4" width={2} />
                <Line points={gasMiddleLow} color="#5f9a4a" width={2} />
                <Line points="395,1247 550,1256 575,1246 700,1230 850,1222 950,1221 1070,1216 1080,1198 1110,1191 1130,1178 1170,1160 1210,1150 1270,1156 1290,1153 1328,1145 1345,1060 1365,880 1380,800 1400,755 1415,735 1440,730 1458,733" color="#3cf53c" width={2} />
                <Line points="27,1372 120,1353 395,1330 430,1325 560,1310 640,1285 740,1240 850,1212 950,1212 1070,1192 1140,1153 1200,1130 1260,1131 1300,1138 1328,1130 1350,1090 1380,1010 1410,965 1458,941" color="#2a2ae0" />
                <Line points="395,1318 550,1305 620,1250 750,1165 850,1150 900,1170 950,1180 1068,1165 1140,1095 1210,1065 1290,1105 1330,1100 1380,890 1425,790 1458,780" color="#7f70b0" />
                <Line points="395,1328 440,1335 550,1308 600,1240 650,1205 750,1135 845,1128 885,1160 940,1175 1000,1165 1070,1157 1140,1070 1210,1034 1250,1070 1295,1112 1330,1090 1350,1000 1380,800 1405,670 1420,660 1458,675" color="#f02cf0" />
                <Line points="395,1310 430,1328 500,1335 550,1333 600,1270 650,1225 700,1170 750,1116 800,1113 845,1105 885,1130 940,1165 1000,1168 1068,1170 1140,1080 1210,1035 1265,1031 1300,1068 1330,1075 1350,1020 1365,920 1400,840 1450,715" color="#fff" />
                <Line points="490,1465 560,1455 620,1435 750,1395 850,1370 950,1355 1070,1330 1150,1295 1250,1277 1300,1275 1345,1256 1400,1200 1458,1174" color="#f21d1d" />
                <Line points="725,1465 850,1435 1000,1408 1070,1392 1130,1370 1220,1346 1300,1338 1345,1318 1400,1270 1458,1247" color="#14e6e6" />
                <Line points="1010,1465 1070,1453 1130,1430 1220,1408 1300,1396 1345,1380 1400,1340 1458,1317" color="#111" />
                <Line points={gasYellow} color="#f2f200" />
                <Line points={gasYellowLow} color="#f2f200" />
                <path d="M1448 730 1440 1465" stroke="#fff" strokeWidth="1.500" strokeDasharray="4 1" vectorEffect="non-scaling-stroke" />
                <path d="M1458 686 1451 698 1458 711" fill="#0d94d6" stroke="#fff" vectorEffect="non-scaling-stroke" />
            </g>
        </svg>
    );
}

function GasWindow() {
    const prices = Array.from({ length: 29 }, (_, i) => (3.21 - i * 0.006).toFixed(3));
    const marks = {
        "3.114": { text: "3.115", style: "bg-white text-[#222]" },
        "3.066": { text: "3.066", style: "bg-[#0ff] text-[#222]" },
        "3.042": { text: "2.986", style: "bg-[#ff0] text-[#222]" },
    };

    return (
        <section className="flex min-h-0 min-w-0 flex-col overflow-hidden bg-[#666]">
            <WindowTitle className="bg-[#777]" icon={<GridIcon className="h-4 w-4" />} title="NG Mar21 - Henry Hub Natural Gas Futures, 5 Min: Candle AC104291" />
            <div className="flex min-h-0 flex-1">
                <GasChart />
                <PriceAxis prices={prices} marks={marks} className="w-[51px] pt-4" />
            </div>
            <TimeAxis
                labels={["6:00", "7:00", "8:00", "9:00", "10:00", "11:00", "12:00", "13:00", "14:00", "15:00", "16:00", "17"]}
                className="h-[17px] grid-cols-[repeat(11,62fr)_30fr_51fr] border-t-2 pl-[18px]"
            />
            <div className="flex h-[21px] shrink-0 bg-[#3c3c3c] pl-[5px]">
                <Tabs names={chartTabs} active="NG" className="px-1" />
            </div>
        </section>
    );
}

function Tabs({ names, active, className }) {
    const [current, setCurrent] = useState(active);

    return (
        <div className="flex overflow-hidden font-[Lato,sans-serif] text-[11px]">
            <button aria-label="Add tab" className="mr-0.5 flex h-[17px] w-4 items-center justify-center bg-[#0d94d6]">
                <svg viewBox="0 0 8 8" className="h-2 w-2"><path d="M4 0V8M0 4H8" stroke="white" strokeWidth="2" /></svg>
            </button>
            {names.map((name) => (
                <button
                    key={name}
                    onClick={() => setCurrent(name)}
                    className={`h-[17px] shrink-0 border-r border-b border-[#222] whitespace-nowrap ${className} ${name === current ? "bg-[#777]" : "bg-[#444]"}`}
                >
                    {name}
                </button>
            ))}
        </div>
    );
}

function Ladder() {
    return (
        <div className="flex min-h-0 min-w-0 overflow-hidden border-l-[3px] border-[#eee] bg-[#444]">
            <div className="flex w-[89px] shrink-0 flex-col pt-[18px] pl-px">
                <Dropdown label="Account" value="AC104291" className="w-[82px]" />
                <label className="mt-1 flex items-center gap-[5px] text-[11px]">
                    <input type="checkbox" defaultChecked className="h-[13px] w-[13px]" />
                    Filter
                </label>
                <Dropdown label="Order type" value="TT Bracket" className="mt-1 w-[82px]" split />
                <button className="mt-[7px] h-[13px] w-9 rounded-sm bg-[#ddd] text-[11px] leading-3 text-black">edit</button>
                <button className="ml-10 h-[13px] w-9 rounded-sm bg-[#ddd] text-[11px] leading-3 font-bold text-black">Hold</button>
            </div>
            <div className="min-w-0 flex-1 pr-px font-['DejaVu_Sans_Mono',monospace] text-[11px]">
                <div className="flex h-[27px] items-end gap-4 pl-[3px] text-[10px] leading-3">
                    <span className="pb-2 text-[#ff0]">+0.0022</span>
                    <span>H:<span className="text-[#dd5]">1.3953</span><br />L:<span className={RED}>1.3858</span></span>
                    <span>O:1.3858<br />V:101322</span>
                </div>
                <table className="w-full table-fixed border-separate border-spacing-0">
                    <Columns columns={ladderColumns} />
                    <thead>
                        <tr className="h-[19px]">
                            {ladderColumns.map((column) => (
                                <Th key={column.label}>{column.label}</Th>
                            ))}
                        </tr>
                    </thead>
                    <tbody>
                        {vap.map(([bid, ask], i) => (
                            <tr key={i} className="h-[23px] [&>td]:border-b [&>td]:border-[#888]">
                                <td />
                                <td className="border-x border-[#4aa5cf]! bg-[#0a78ad] border-b-[#0a78ad]!" />
                                <td className="border-b-[#4aa5cf]!" />
                                <td className="border-b-[#ccc]! bg-[#ccc] pt-[3px] text-center font-['Liberation_Sans',Arial,sans-serif] text-[13px] text-[#555]">{(1.3938 - i * 0.0001).toFixed(4)}</td>
                                <td className="border-r border-[#c46a6a]! bg-[#b12626]" />
                                <td className="border-r border-[#c46a6a]! bg-[#b12626]" />
                                <td className="pt-0.5">
                                    <div className="flex h-[18px]">
                                        <span className="border-t border-[#333] bg-[#0a78ad]" style={{ width: bid }} />
                                        <span className="border-t border-[#333] bg-[#b12626]" style={{ width: ask }} />
                                    </div>
                                </td>
                            </tr>
                        ))}
                    </tbody>
                </table>
            </div>
        </div>
    );
}

function Depth() {
    return (
        <div className="flex min-h-0 min-w-0 flex-col overflow-hidden border-l-[3px] border-[#eee] bg-[#282828] font-['DejaVu_Sans_Mono',monospace] text-[11px]">
            <p className="h-6 shrink-0 bg-[#444] pl-16 text-[10px] leading-6 whitespace-pre text-white">Last: 1.3872  LTQ: 2  H: 1.3953</p>
            <div className="flex min-h-0 flex-1">
                <div className="min-w-0 flex-1 overflow-hidden">
                    <table className="w-full table-fixed border-separate border-spacing-0">
                        <Columns columns={depthColumns} />
                        <thead>
                            <tr className="h-5">
                                {depthColumns.map((column) => (
                                    <Th key={column.label}>{column.label}</Th>
                                ))}
                            </tr>
                        </thead>
                        <tbody className="text-right font-['Liberation_Sans',Arial,sans-serif] text-[12px]">
                            {Array.from({ length: 28 }, (_, i) => {
                                const [bidCum, bidQty, askQty, askCum] = depth[i] || [];
                                const top = i === 0;
                                return (
                                    <tr key={i} className="h-[22px] [&>td]:border-b [&>td]:border-[#222] [&>td]:px-[3px]">
                                        <td className={`font-bold ${top ? "bg-[#0d94d6]" : ""}`}>{bidCum}</td>
                                        <td className={top ? "bg-[#0d94d6] font-bold" : BLUE}>{bidQty}</td>
                                        <td className="bg-[#0d94d6] font-bold">{top && "1.3872"}</td>
                                        <td className="bg-[#d13636] font-bold">{top && "1.3873"}</td>
                                        <td className={top ? "bg-[#d13636] font-bold" : `bg-[#303030] ${RED}`}>{askQty}</td>
                                        <td className={`font-bold ${top ? "bg-[#d13636]" : "bg-[#303030]"}`}>{askCum}</td>
                                    </tr>
                                );
                            })}
                        </tbody>
                    </table>
                </div>
                <div className="mt-5 w-[11px] shrink-0 bg-[#777] pr-px">
                    <div className="h-48 bg-[#eee]" />
                </div>
            </div>
        </div>
    );
}

function FillAlerts({ onClose }) {
    return (
        <section className="absolute top-[132px] left-[210px] z-30 flex h-[453px] w-[1118px] flex-col border border-[#555] bg-[#222]" role="dialog" aria-label="Fill Alerts">
            <WindowTitle className="bg-[#555]" icon={<CheckIcon />} title="Fill Alerts" minimize={false} onClose={onClose} />
            <div className="flex h-8 shrink-0 items-center bg-[#444] px-[5px]">
                <Dropdown label="View" value="Detail" className="w-[98px]" split />
                <input aria-label="Date" placeholder="Select a date" className="ml-1 h-5 w-[88px] rounded-sm bg-white text-center text-black placeholder:text-[#777]" />
                <label className="ml-auto flex items-center gap-1.5 text-[#2c2c2c]">
                    <input type="checkbox" className="h-[13px] w-[13px] appearance-none rounded-xs border border-[#999] bg-white" />
                    Select All
                </label>
                <button className="ml-2 h-[21px] w-10 rounded border border-[#2a2a2a] bg-linear-to-b from-[#6b6b6b] to-[#4c4c4c] [text-shadow:0_0_1px_#aaa]">Copy</button>
                <button className="ml-1 -mr-0.5 h-[21px] w-[72px] rounded border border-[#2a2a2a] bg-linear-to-b from-[#6b6b6b] to-[#4c4c4c] [text-shadow:0_0_1px_#aaa]">Confirm All</button>
            </div>
            <div className="min-h-0 flex-1 overflow-hidden pr-4 font-['DejaVu_Sans_Mono',monospace] text-[11px]">
                <table className="w-full table-fixed border-separate border-spacing-0">
                    <Columns columns={fillColumns} />
                    <thead>
                        <tr className="h-[17px]">
                            {fillColumns.map((column) => (
                                <Th key={column.label}>{column.label}</Th>
                            ))}
                        </tr>
                    </thead>
                    <tbody>
                        {fills.map(([time, contract, side, qty, price, user, order, parent]) => (
                            <tr key={order} className={`h-[22px] bg-[#333] ${side === "S" ? RED : BLUE}`}>
                                {["16Feb21", time, "CME", contract, side, qty, price, "F", "Direct", "AC104291", user, user, order, parent, ""].map((cell, i) => (
                                    <td key={i} className={`border-b border-[#222] px-[3px] whitespace-nowrap ${fillColumns[i].align}`}>{cell}</td>
                                ))}
                            </tr>
                        ))}
                    </tbody>
                </table>
            </div>
            <div className="flex h-7 shrink-0 items-center justify-end bg-[#444] pr-0.5">
                <button className="h-[22px] w-[41px] rounded bg-[#d9534f] text-white [text-shadow:0_0_1px_#eee]">Clear</button>
            </div>
        </section>
    );
}

function favCellStyle(index, row) {
    const down = row[3].startsWith("-");
    const active = row[0] === "6B Mar21";
    if (index === 3 || index === 4) {
        if (down) return "bg-[#f00] text-[#5a0000]";
        return active ? "bg-[#1c1cf0]" : "bg-[#00f]";
    }
    if (index === 5) return BLUE;
    if (index === 8) return RED;
    if (index === 6) return active ? "bg-[#2799d5] font-bold" : "bg-[#0d94d6] font-bold";
    if (index === 7) return active ? "bg-[#cd4a4a] font-bold" : "bg-[#d13636] font-bold";
    if (index === 0) return "border-t border-t-[#555] border-r border-r-[#222]";
    return "";
}

function FavoritesWindow() {
    return (
        <section className="flex min-h-0 min-w-0 flex-col overflow-hidden border border-[#555] bg-[#444]">
            <WindowTitle className="bg-[#777]" icon={<GridIcon className="h-4 w-4" />} title="Favorites -- 6B Mar21" />
            <div className="grid min-h-0 flex-1 grid-cols-[1009fr_253fr] font-['DejaVu_Sans_Mono',monospace] text-[11px]">
                <div className="flex min-w-0 flex-col">
                    <div className="flex h-[254px] bg-[#333]">
                        <div className="min-w-0 flex-1 overflow-hidden">
                            <table className="w-full table-fixed border-separate border-spacing-0">
                                <Columns columns={favColumns} />
                                <thead>
                                    <tr className="h-5">
                                        {favColumns.map((column, i) => (
                                            <Th key={column.label} className={i === 0 ? "pl-1 text-left" : ""}>
                                                {i === 0 && <Expander />} {column.label}
                                            </Th>
                                        ))}
                                    </tr>
                                </thead>
                                <tbody className="[text-shadow:0_0_1px_#888]">
                                    {favorites.map((row) => (
                                        <tr key={row[0]} className={`h-[22px] ${row[0] === "6B Mar21" ? "bg-[#474747]" : "bg-[#333]"}`}>
                                            {row.map((cell, i) => (
                                                <td key={i} className={`border-b border-b-[#222] whitespace-nowrap ${i === 0 ? "pl-1" : i === 14 ? "pr-px" : "px-0.5"} ${favColumns[i].align} ${favCellStyle(i, row)}`}>
                                                    {i === 0 ? <span className="flex items-center gap-1"><Expander />{cell}</span> : cell}
                                                </td>
                                            ))}
                                        </tr>
                                    ))}
                                    <tr className="h-[22px]">
                                        {favColumns.map((column, i) => (
                                            <td key={column.label} className={i === 6 ? "bg-[#0d94d6]" : i === 7 ? "bg-[#d13636]" : ""} />
                                        ))}
                                    </tr>
                                </tbody>
                            </table>
                        </div>
                        <div className="mt-5 w-[7px] bg-[#eee]" />
                    </div>
                    <div className="flex h-2.5 shrink-0 border-y border-[#777] bg-[#777] pr-2"><div className="flex-1 bg-[#eee]" /></div>
                    <div className="pl-[3px]"><Tabs names={favTabs} active="Favorites" className="px-[3px]" /></div>
                </div>
                <TradeList />
            </div>
        </section>
    );
}

function TradeList() {
    return (
        <div className="flex min-w-0 overflow-hidden border-l-[3px] border-[#eee] bg-[#333]">
            <div className="min-w-0 flex-1 overflow-hidden">
                <table className="w-full table-fixed border-separate border-spacing-0">
                    <Columns columns={tradeColumns} />
                    <thead>
                        <tr className="h-[17px]">
                            {tradeColumns.map((column) => (
                                <Th key={column.label}>{column.label}</Th>
                            ))}
                        </tr>
                    </thead>
                    <tbody>
                        {trades.map(([time, qty, side], i) => (
                            <tr key={i} className={`h-[22px] [&>td]:border-b [&>td]:border-[#222] [&>td]:px-[3px] [&>td]:whitespace-nowrap ${side === "S" ? RED : BLUE}`}>
                                <td>{time}</td>
                                <td>6B Mar21</td>
                                <td className="text-right">1.3872</td>
                                <td className="text-right">{qty}</td>
                            </tr>
                        ))}
                    </tbody>
                </table>
            </div>
            <div className="mt-[17px] w-[10px] bg-[#777] px-px">
                <div className="h-[13px] bg-[#eee]" />
            </div>
        </div>
    );
}

function Branch() {
    return <span className="ml-[3px] block h-[11px] w-1.5 border-b-2 border-l-2 border-[#666]" />;
}

const positionRow = {
    total: "bg-[#333] font-bold [&>td]:border-b [&>td]:border-[#eee]",
    product: "bg-[#2b2b2b]",
    contract: "bg-[#252525]",
    account: "bg-[#1c1c1c]",
};

function PositionsWindow() {
    return (
        <section className="flex min-h-0 min-w-0 flex-col overflow-hidden border border-l-2 border-[#555] bg-[#222]">
            <WindowTitle className="bg-[#777]" icon={<PositionsIcon />} title="Positions - USD" />
            <div className="relative flex min-h-0 flex-1 font-['DejaVu_Sans_Mono',monospace] text-[11px]">
                <div className="min-w-0 flex-1 overflow-hidden pr-1">
                    <table className="w-full table-fixed border-separate border-spacing-0">
                        <Columns columns={posColumns} />
                        <thead>
                            <tr className="h-5">
                                {posColumns.map((column, i) => (
                                    <Th key={column.label} className={i === 0 ? "relative" : i === 1 ? "pl-1 text-left" : ""}>
                                        {i === 0 && <span className="absolute top-0 left-1.5"><Expander open /></span>}
                                        {i === 1 && <Expander open />} {column.label}
                                    </Th>
                                ))}
                            </tr>
                        </thead>
                        <tbody className="[text-shadow:0_0_1px_#888]">
                            {positions.map((row, i) => (
                                <tr key={i} className={`h-[22px] [&>td]:pr-[5px] [&>td]:text-right [&>td]:whitespace-nowrap ${row.hover ? "bg-[#444]" : positionRow[row.level]}`}>
                                    <td className={`pl-1.5 ${row.level === "contract" ? "align-top" : ""}`}>
                                        {row.level === "product" && <span className="flex items-center gap-1.5"><Expander open />{row.name}</span>}
                                        {row.level === "contract" && <Branch />}
                                    </td>
                                    <td className={`pl-1.5 ${row.level === "account" ? "align-top" : ""}`}>
                                        {row.level === "contract" && <span className="flex items-center gap-1.5"><Expander open />{row.name}</span>}
                                        {row.level === "account" && <Branch />}
                                    </td>
                                    <td>{row.level === "account" && "AC104291"}</td>
                                    <td>{row.level === "account" && "CME"}</td>
                                    <td>0</td>
                                    <td>{row.qty}</td>
                                    <td>{row.qty}</td>
                                    <td>{row.net}</td>
                                    <td className="bg-[#d13636] font-bold">{row.pl}</td>
                                    <td>{row.buy}</td>
                                    <td>{row.sell}</td>
                                    <td />
                                </tr>
                            ))}
                        </tbody>
                    </table>
                </div>
                <div className="absolute top-5 right-0 bottom-0 w-2.5 bg-[#777] pt-5 pl-px">
                    <div className="h-full bg-[#eee]" />
                </div>
            </div>
        </section>
    );
}
